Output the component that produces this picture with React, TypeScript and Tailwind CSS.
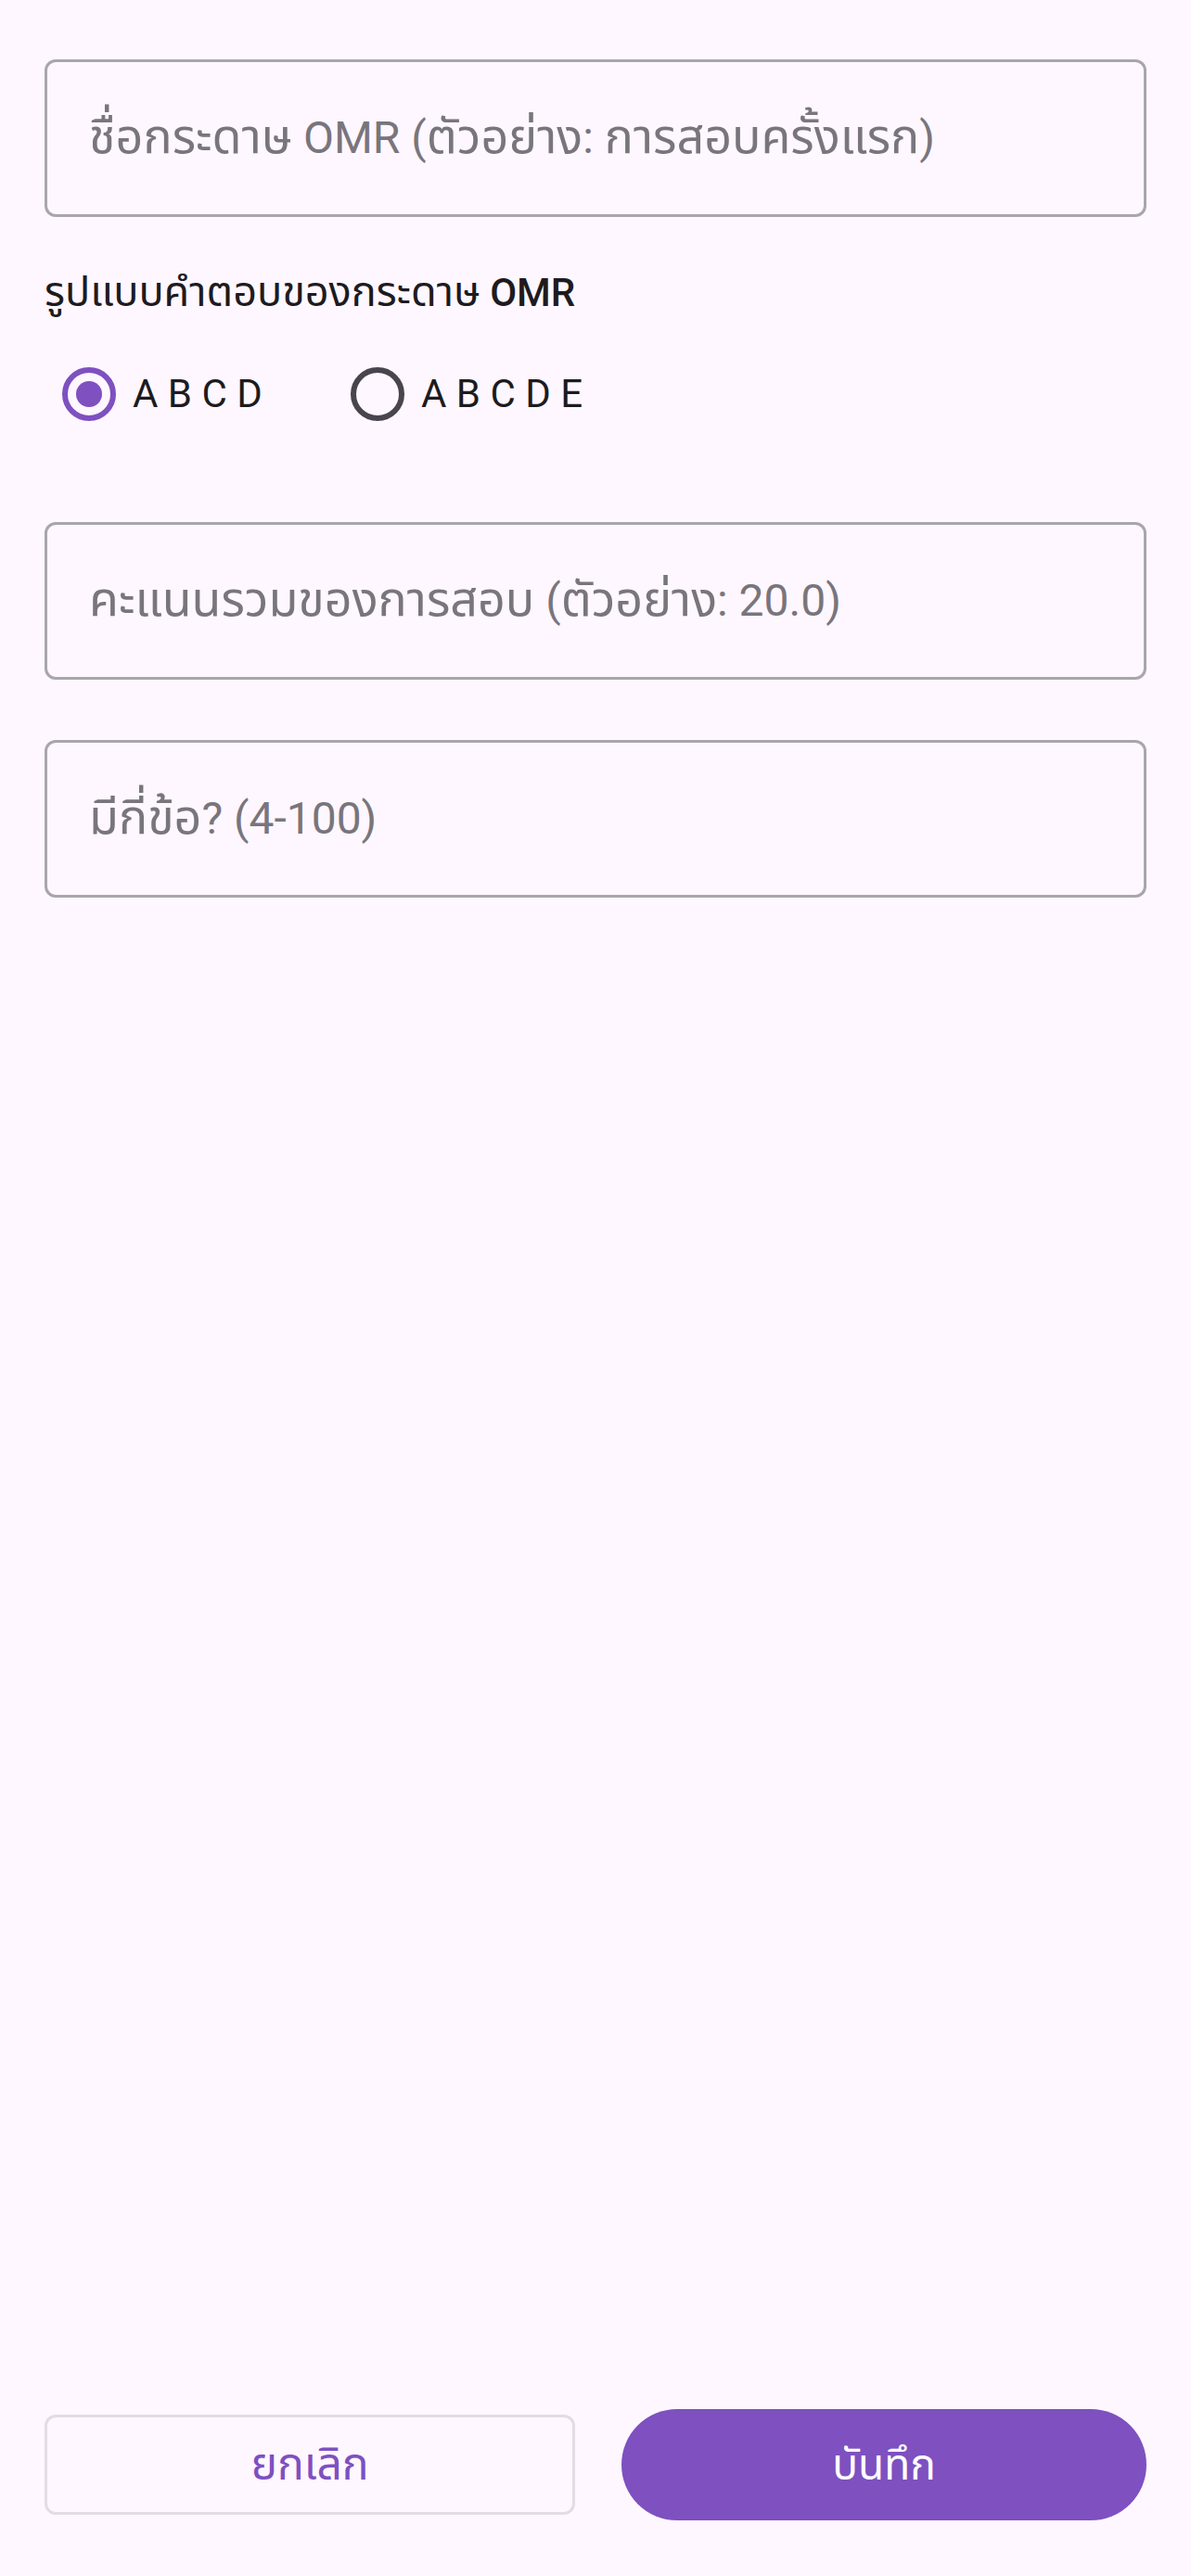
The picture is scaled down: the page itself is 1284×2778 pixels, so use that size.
import React from "react";

function Mixed({ text, thai, latin }: { text: string; thai: string; latin: string }) {
  const runs = text.match(/[\u0E00-\u0E7F]+|[^\u0E00-\u0E7F]+/g) || [];
  return (
    <>
      {runs.map((r, i) => (
        <span key={i} className={/[\u0E00-\u0E7F]/.test(r) ? thai : latin}>
          {r}
        </span>
      ))}
    </>
  );
}

function Field({ placeholder, className = "" }: { placeholder: string; className?: string }) {
  return (
    <div
      className={`h-[170px] w-full rounded-[12px] border-[3px] border-[#a9a5ac] pl-[45px] pr-[45px] pt-[10px] flex items-center ${className}`}
    >
      <span className="leading-[64px] text-[#79757c] whitespace-nowrap">
        <Mixed text={placeholder} thai="text-[52px]" latin="text-[48px]" />
      </span>
    </div>
  );
}

function Radio({ checked }: { checked: boolean }) {
  return (
    <svg width="60" height="60" viewBox="0 0 60 60" className="shrink-0">
      <circle
        cx="30"
        cy="30"
        r="26"
        fill="none"
        stroke={checked ? "#7e50c0" : "#49454f"}
        strokeWidth="6"
      />
      {checked && <circle cx="30" cy="30" r="14" fill="#7e50c0" />}
    </svg>
  );
}

export default function App() {
  return (
    <div
      className="min-h-[2778px] h-[2778px] w-full bg-[#fef7ff] flex flex-col px-[48px] pt-[64px] pb-[60px]"
      style={{ fontFamily: 'Roboto, "Noto Sans Thai", "Noto Sans Thai UI", "Noto Sans", sans-serif' }}
    >
      <Field placeholder="ชื่อกระดาษ OMR (ตัวอย่าง: การสอบครั้งแรก)" />

      <div className="mt-[57px] h-[48px] leading-[48px] text-[#1d1b20] whitespace-nowrap">
        <Mixed
          text="รูปแบบคำตอบของกระดาษ OMR"
          thai="text-[45px] font-normal"
          latin="text-[42px] font-medium"
        />
      </div>

      <div className="mt-[26px] h-[120px] flex items-center">
        <div className="w-[311px] ml-[18px] flex items-center">
          <Radio checked={true} />
          <span className="ml-[17px] text-[42px] leading-[56px] text-[#1d1b20]">A B C D</span>
        </div>
        <div className="flex items-center">
          <Radio checked={false} />
          <span className="ml-[17px] text-[42px] leading-[56px] text-[#1d1b20]">A B C D E</span>
        </div>
      </div>

      <Field className="mt-[78px]" placeholder="คะแนนรวมของการสอบ (ตัวอย่าง: 20.0)" />
      <Field className="mt-[65px]" placeholder="มีกี่ข้อ? (4-100)" />

      <div className="mt-auto flex items-center gap-[50px]">
        <button className="flex-1 h-[108px] rounded-[12px] border-[3px] border-[#e2dce3] flex items-center justify-center text-[48px] leading-[56px] text-[#7e50c0]">
          ยกเลิก
        </button>
        <button className="flex-1 h-[120px] rounded-full bg-[#7e50c0] flex items-center justify-center text-[46px] leading-[56px] text-white">
          บันทึก
        </button>
      </div>
    </div>
  );
}
